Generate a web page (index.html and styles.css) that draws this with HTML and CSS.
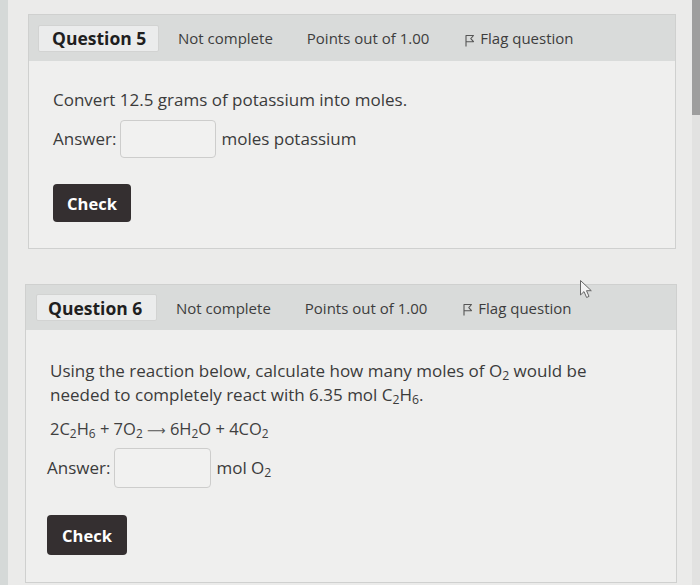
FILE: index.html
```html
<!DOCTYPE html>
<html>
<head>
<meta charset="utf-8">
<link rel="stylesheet" href="styles.css">
</head>
<body>
<div class="screen">
  <div class="left-strip"></div>
  <main class="main">
    <section class="que que-5">
      <header class="que-head">
        <div class="qno">Question 5</div>
        <span class="state">Not complete</span>
        <span class="grade">Points out of 1.00</span>
        <span class="flag">
          <svg class="flag-icon" width="11" height="14" viewBox="0 0 11 14"><path d="M2 13.5V2.5H9.5L6.8 5.6L9.5 8.7H2" fill="none" stroke="#555" stroke-width="1.1" stroke-linejoin="round"/></svg>
          Flag question
        </span>
      </header>
      <div class="que-body">
        <p class="qtext">Convert 12.5 grams of potassium into moles.</p>
        <div class="answer">
          <span class="ans-label">Answer:</span>
          <span class="ans-box"></span>
          <span class="ans-unit">moles potassium</span>
        </div>
        <button class="check">Check</button>
      </div>
    </section>

    <section class="que que-6">
      <header class="que-head">
        <div class="qno">Question 6</div>
        <span class="state">Not complete</span>
        <span class="grade">Points out of 1.00</span>
        <span class="flag">
          <svg class="flag-icon" width="11" height="14" viewBox="0 0 11 14"><path d="M2 13.5V2.5H9.5L6.8 5.6L9.5 8.7H2" fill="none" stroke="#555" stroke-width="1.1" stroke-linejoin="round"/></svg>
          Flag question
        </span>
      </header>
      <div class="que-body">
        <p class="qtext">Using the reaction below, calculate how many moles of O<sub>2</sub> would be needed to completely react with 6.35 mol C<sub>2</sub>H<sub>6</sub>.</p>
        <p class="eq">2C<sub>2</sub>H<sub>6</sub> + 7O<sub>2</sub> <span class="arrow">⟶</span> 6H<sub>2</sub>O + 4CO<sub>2</sub></p>
        <div class="answer">
          <span class="ans-label">Answer:</span>
          <span class="ans-box"></span>
          <span class="ans-unit">mol O<sub>2</sub></span>
        </div>
        <button class="check">Check</button>
      </div>
      <svg class="cursor" width="16" height="22" viewBox="0 0 16 22"><path d="M1.5 1.5V16L5 12.6L7.6 18.5L10 17.4L7.5 11.7H12.3Z" fill="#f4f4f4" stroke="#666" stroke-width="1" stroke-linejoin="round"/></svg>
    </section>
  </main>
  <div class="scrollbar"><div class="thumb"></div></div>
</div>
</body>
</html>
```

FILE: styles.css
```css
* { box-sizing: border-box; }
html, body {
  margin: 0;
  padding: 0;
  width: 700px;
  height: 585px;
  overflow: hidden;
  background: #ebebea;
  font-family: "Open Sans", "Noto Sans", sans-serif;
  color: #3b3b3b;
}
.screen {
  display: flex;
  height: 585px;
}
.left-strip {
  width: 8px;
  flex: none;
  background: #d5d9d8;
}
.main {
  flex: 1;
  padding-top: 14px;
  display: flex;
  flex-direction: column;
}
.scrollbar {
  width: 8px;
  flex: none;
  background: #e2e2e1;
  display: flex;
  flex-direction: column;
}
.thumb {
  height: 115px;
  background: #9e9e9e;
}
.que {
  position: relative;
  border: 1px solid #cfd0cf;
  background: #efefee;
}
.que-5 {
  margin-left: 20px;
  width: 648px;
}
.que-6 {
  margin-left: 17px;
  margin-top: 35px;
  width: 652px;
}
.que-head {
  display: flex;
  align-items: center;
  background: #d9dbda;
  font-size: 15px;
  color: #3d3d3d;
}
.que-5 .que-head { height: 46px; padding-left: 9px; }
.que-6 .que-head { height: 45px; padding-left: 10px; }
.qno {
  background: #ebecec;
  border: 1px solid #d2d3d2;
  border-radius: 2px;
  height: 27px;
  width: 121px;
  padding-left: 13px;
  display: flex;
  align-items: center;
  font-weight: 700;
  font-size: 17.5px;
  color: #1f1f1f;
  margin-right: 19px;
}
.que-6 .qno { padding-left: 11px; }
.state { margin-right: 34px; }
.grade { margin-right: 35px; }
.flag {
  display: flex;
  align-items: center;
  gap: 5px;
}
.flag-icon { margin-top: 3px; }
.que-body {
  padding: 27px 24px 26px;
  font-size: 17px;
  line-height: 24px;
}
.que-6 .que-body { padding-left: 24px; padding-top: 29px; padding-bottom: 27px; }
.qtext { margin: 0; }
.que-6 .qtext { width: 580px; }
.eq {
  margin: 10px 0 0;
  font-size: 16.5px;
  color: #404040;
}
.arrow {
  font-family: "DejaVu Sans", sans-serif;
  font-size: 13px;
  color: #555;
}
sub {
  font-size: 0.72em;
  line-height: 0;
  vertical-align: -0.25em;
}
.answer {
  display: flex;
  align-items: center;
  margin-top: 8px;
}
.que-6 .answer { margin-top: 5px; margin-left: -3px; }
.ans-label { margin-right: 4px; }
.ans-box {
  display: block;
  width: 96px;
  height: 38px;
  border: 1px solid #cdcdcc;
  border-radius: 4px;
  background: #f1f1f0;
  margin-right: 5px;
}
.que-6 .ans-box { height: 40px; width: 97px; }
.check {
  display: block;
  margin-top: 26px;
  height: 38px;
  width: 78px;
  border: none;
  border-radius: 4px;
  background: #342f30;
  color: #ffffff;
  font-family: "Open Sans", "Noto Sans", sans-serif;
  font-weight: 700;
  font-size: 16.5px;
  padding: 0;
}
.que-6 .check { margin-top: 27px; height: 40px; width: 80px; margin-left: -3px; }
.cursor {
  position: absolute;
  left: 553px;
  top: -6px;
}
```
